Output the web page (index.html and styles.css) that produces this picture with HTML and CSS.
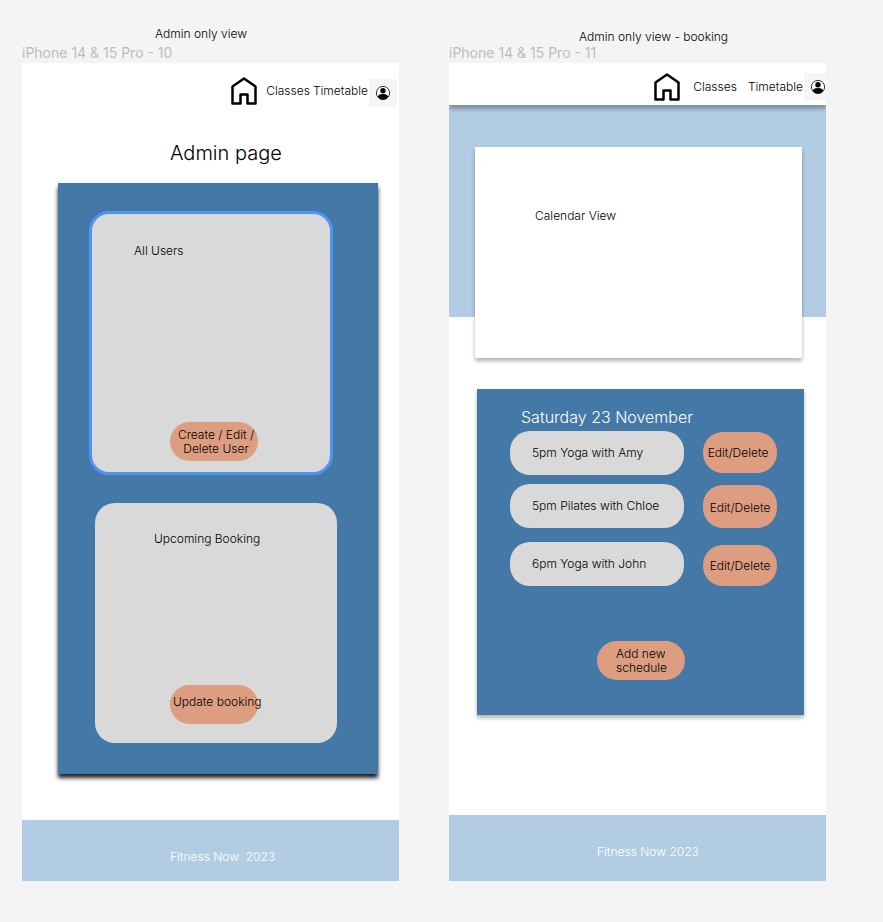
FILE: index.html
```html
<!DOCTYPE html>
<html lang="en">
<head>
  <meta charset="utf-8">
  <meta name="viewport" content="width=device-width, initial-scale=1">
  <title>Fitness Now admin views</title>
  <link rel="stylesheet" href="styles.css">
</head>
<body>
  <svg class="sprite" aria-hidden="true">
    <symbol id="home" viewBox="0 0 26 28">
      <path d="M1.500 26.500V9.500L13 1.500l11.500 8v17H16.500V17.500h-7v9z" fill="none" stroke="#000" stroke-width="2.500" stroke-linejoin="round"/>
    </symbol>
    <symbol id="user" viewBox="0 0 14 14">
      <circle cx="7" cy="7" r="6.600" fill="#fff" stroke="#000" stroke-width=".8"/>
      <circle cx="7" cy="4.800" r="2.700"/>
      <path d="M1.700 10.800C2.400 8.500 4.600 7.900 7 7.900s4.600.6 5.300 2.900A6.500 6.500 0 0 1 7 13.500a6.500 6.500 0 0 1-5.300-2.700z"/>
    </symbol>
  </svg>

  <main class="canvas">
    <section class="board">
      <p class="caption">Admin only view</p>
      <p class="frame-name">iPhone 14 &amp; 15 Pro - 10</p>
      <div class="frame">
        <header class="topbar topbar-plain">
          <nav class="nav">
            <a class="home" href="#" aria-label="Home"><svg><use href="#home"/></svg></a>
            <a href="#">Classes</a>
            <a href="#">Timetable</a>
          </nav>
          <a class="account" href="#" aria-label="Account"><svg><use href="#user"/></svg></a>
        </header>
        <h1 class="page-title">Admin page</h1>
        <div class="panel admin-panel">
          <section class="card card-selected">
            <h2 class="card-title">All Users</h2>
            <button class="action action-users" type="button">Create / Edit /<br>Delete User</button>
          </section>
          <section class="card card-bookings">
            <h2 class="card-title">Upcoming Booking</h2>
            <button class="action action-update" type="button">Update booking</button>
          </section>
        </div>
        <footer class="footer">Fitness Now  2023</footer>
      </div>
    </section>

    <section class="board board-booking">
      <p class="caption">Admin only view - booking</p>
      <p class="frame-name">iPhone 14 &amp; 15 Pro - 11</p>
      <div class="frame">
        <header class="topbar topbar-raised">
          <nav class="nav">
            <a class="home" href="#" aria-label="Home"><svg><use href="#home"/></svg></a>
            <a href="#">Classes</a>
            <a href="#">Timetable</a>
          </nav>
          <a class="account" href="#" aria-label="Account"><svg><use href="#user"/></svg></a>
        </header>
        <div class="hero">
          <section class="calendar">
            <h2 class="card-title">Calendar View</h2>
          </section>
        </div>
        <section class="panel schedule">
          <h2 class="schedule-title">Saturday 23 November</h2>
          <ul class="sessions">
            <li class="session session-first"><span class="slot">5pm Yoga with Amy</span><button class="action" type="button">Edit/Delete</button></li>
            <li class="session session-second"><span class="slot">5pm Pilates with Chloe</span><button class="action" type="button">Edit/Delete</button></li>
            <li class="session session-third"><span class="slot">6pm Yoga with John</span><button class="action" type="button">Edit/Delete</button></li>
          </ul>
          <button class="action action-add" type="button">Add new<br>schedule</button>
        </section>
        <footer class="footer">Fitness Now 2023</footer>
      </div>
    </section>
  </main>
</body>
</html>
```

FILE: styles.css
```css
* {
  box-sizing: border-box;
}

body {
  margin: 0;
  background: #f4f4f4;
  color: #000;
  font: 300 12px/14px Inter, "Liberation Sans", sans-serif;
}

h1, h2, p, ul {
  margin: 0;
  padding: 0;
  font-size: inherit;
  font-weight: inherit;
}

a {
  color: inherit;
  text-decoration: none;
}

svg {
  display: block;
  width: 100%;
  height: 100%;
}

.sprite {
  position: absolute;
  width: 0;
  height: 0;
}

.canvas {
  display: grid;
  grid-template-columns: 1fr 1fr;
  gap: 50px;
  padding: 27px 57px 41px 22px;
}

.board {
  display: flex;
  flex-direction: column;
}

.caption {
  padding: 0 0 3px 133px;
}

.board-booking .caption {
  padding: 3px 0 0 130px;
}

.frame-name {
  padding-bottom: 1px;
  color: #bdbdbd;
  font-size: 14px;
  font-weight: 400;
  line-height: 18px;
}

.frame {
  display: flex;
  flex: 1;
  flex-direction: column;
  background: #fff;
}

/* Top bars */
.topbar {
  display: flex;
  justify-content: flex-end;
  align-items: center;
}

.nav {
  display: flex;
  align-items: center;
}

.home {
  width: 26px;
  height: 28px;
}

.account {
  height: 28px;
  padding: 7px;
  background: #f5f5f5;
}

.account svg {
  width: 14px;
  height: 14px;
}

.topbar-plain {
  height: 60px;
  padding: 0 2px 4px 0;
}

.topbar-plain .nav {
  gap: 3px;
  margin-right: 1px;
}

.topbar-plain .home {
  margin-right: 6px;
}

.topbar-plain .account {
  margin-top: 4px;
}

.topbar-raised {
  position: relative;
  height: 42px;
  padding-top: 6px;
  background: #fff;
  box-shadow: 0 4px 4px rgba(0, 0, 0, .3);
  clip-path: inset(0 0 -8px);
}

.topbar-raised .nav {
  gap: 11px;
  margin-right: 1px;
}

.topbar-raised .home {
  margin-right: 2px;
}

.topbar-raised .account {
  padding-right: 1px;
}

/* Panels and cards */
.page-title {
  padding: 18px 0 18px 148px;
  font-size: 20px;
  line-height: 24px;
}

.panel {
  display: flex;
  flex-direction: column;
  background: #4478a7;
}

.admin-panel {
  gap: 28px;
  margin: 0 21px 46px 36px;
  padding: 28px 41px 31px 31px;
  box-shadow: 0 4px 4px #222;
}

.card {
  display: flex;
  flex-direction: column;
  justify-content: space-between;
  align-items: flex-start;
  min-height: 240px;
  border-radius: 20px;
  background: #d9d9d9;
}

.card-selected {
  min-height: 264px;
  margin-right: 4px;
  padding: 30px 0 11px 42px;
  border: 3px solid #4f94f5;
}

.card-bookings {
  margin-left: 6px;
  padding: 29px 0 19px 59px;
}

.card-selected .action {
  margin-left: 36px;
}

.card-bookings .action {
  margin-left: 16px;
}

.action {
  width: 88px;
  height: 39px;
  padding: 0;
  border: 0;
  border-radius: 20px;
  background: #dd9d80;
  color: #000;
  font: inherit;
  text-align: center;
  white-space: nowrap;
}

.action-users {
  padding-left: 4px;
}

.action-update {
  padding: 0 0 6px 3px;
  text-align: left;
}

/* Booking view */
.hero {
  display: flex;
  flex-direction: column;
  padding: 42px 24px 0 26px;
  background: #b2cde3;
}

.calendar {
  min-height: 211px;
  margin-bottom: -41px;
  padding: 62px 60px;
  background: #fff;
  box-shadow: 0 3px 4px rgba(0, 0, 0, .3);
}

.schedule {
  margin: 72px 22px 100px 28px;
  padding: 18px 27px 35px 33px;
  box-shadow: 0 3px 4px rgba(0, 0, 0, .3);
}

.schedule-title {
  padding: 0 0 4px 11px;
  color: #fff;
  font-size: 16px;
  line-height: 20px;
}

.sessions {
  list-style: none;
}

.session {
  display: flex;
  justify-content: space-between;
  align-items: flex-start;
  margin-bottom: 9px;
}

.slot {
  flex: 1;
  margin-right: 19px;
  padding: 15px 22px;
  border-radius: 20px;
  background: #d9d9d9;
}

.session .action {
  width: 74px;
  height: 41px;
  margin-top: 1px;
}

.session-first .action {
  padding-right: 4px;
}

.session-second {
  margin-bottom: 14px;
}

.session-second .action {
  height: 43px;
  padding-top: 3px;
}

.session-third {
  margin-bottom: 55px;
}

.session-third .action {
  margin-top: 3px;
}

.action-add {
  margin-left: 87px;
  padding-left: 19px;
  text-align: left;
}

.footer {
  flex: 1;
  padding: 30px 0 17px 148px;
  background: #b2cde3;
  color: #fff;
  white-space: pre;
}
```
